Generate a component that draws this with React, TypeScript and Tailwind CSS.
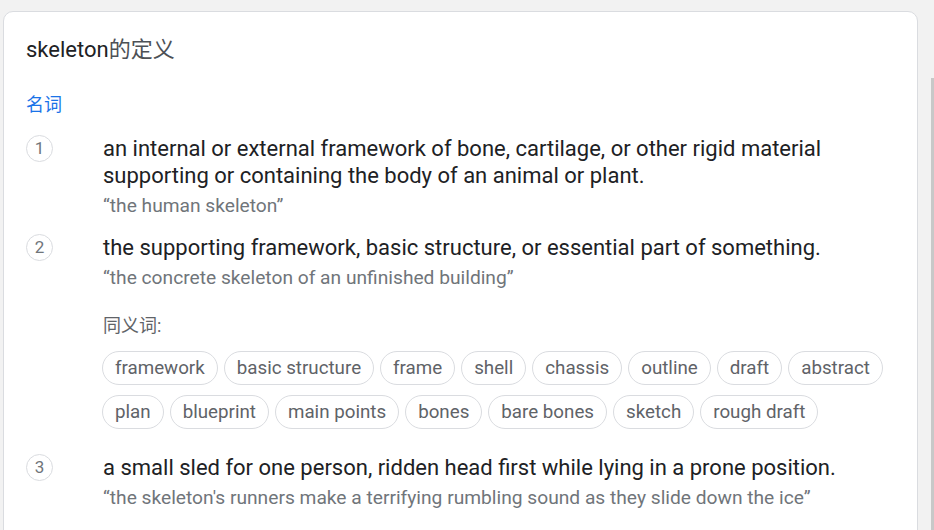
const synonymRows = [
  ["framework", "basic structure", "frame", "shell", "chassis", "outline", "draft", "abstract"],
  ["plan", "blueprint", "main points", "bones", "bare bones", "sketch", "rough draft"],
];

function Num({ n }: { n: number }) {
  return (
    <div className="w-[27px] h-[27px] shrink-0 rounded-full border border-[#dadce0] flex items-center justify-center text-[17px] text-[#70757a]">
      {n}
    </div>
  );
}

function Chip({ label }: { label: string }) {
  return (
    <div className="h-[34px] px-[12px] rounded-full border border-[#dadce0] flex items-center text-[18.75px] text-[#5f6368]">
      {label}
    </div>
  );
}

export default function App() {
  return (
    <div
      className="min-h-screen bg-[#f2f2f2] flex text-[#202124]"
      style={{ fontFamily: 'Roboto, "Noto Sans CJK SC", sans-serif' }}
    >
      <div className="flex-1 pl-[3px] pt-[11px]">
        <div className="bg-white border border-[#dadce0] rounded-[10px] h-[530px] pt-[24px] pl-[22px] pr-[20px]">
          <div className="text-[22px] leading-[28px] text-[#202124]">skeleton<span className="text-[#4d5156]">的定义</span></div>
          <div className="mt-[29px] text-[18px] leading-[24px] text-[#1a73e8]">名词</div>

          <div className="mt-[18px] flex">
            <Num n={1} />
            <div className="ml-[50px]">
              <div className="text-[22px] leading-[27px]">
                an internal or external framework of bone, cartilage, or other rigid material supporting or containing the body of an animal or plant.
              </div>
              <div className="mt-[2px] text-[19.2px] leading-[30px] text-[#70757a]">“the human skeleton”</div>
            </div>
          </div>

          <div className="mt-[13px] flex">
            <Num n={2} />
            <div className="ml-[50px]">
              <div className="text-[22px] leading-[27px]">
                the supporting framework, basic structure, or essential part of something.
              </div>
              <div className="mt-[2px] text-[19.2px] leading-[30px] text-[#70757a]">“the concrete skeleton of an unfinished building”</div>
              <div className="mt-[21px] text-[18px] leading-[24px] text-[#5f6368]">同义词:</div>
              <div className="mt-[13px] -ml-px flex flex-col gap-[10px]">
                {synonymRows.map((row, i) => (
                  <div key={i} className="flex gap-[6px]">
                    {row.map((s) => (
                      <Chip key={s} label={s} />
                    ))}
                  </div>
                ))}
              </div>
            </div>
          </div>

          <div className="mt-[25px] flex">
            <Num n={3} />
            <div className="ml-[50px]">
              <div className="text-[22px] leading-[27px]">
                a small sled for one person, ridden head first while lying in a prone position.
              </div>
              <div className="mt-[2px] text-[19.2px] leading-[30px] text-[#70757a]">“the skeleton's runners make a terrifying rumbling sound as they slide down the ice”</div>
            </div>
          </div>
        </div>
      </div>
      <div className="w-[16px] flex justify-end">
        <div className="w-[3px] mt-[78px] bg-[#c8c8c8]" />
      </div>
    </div>
  );
}
